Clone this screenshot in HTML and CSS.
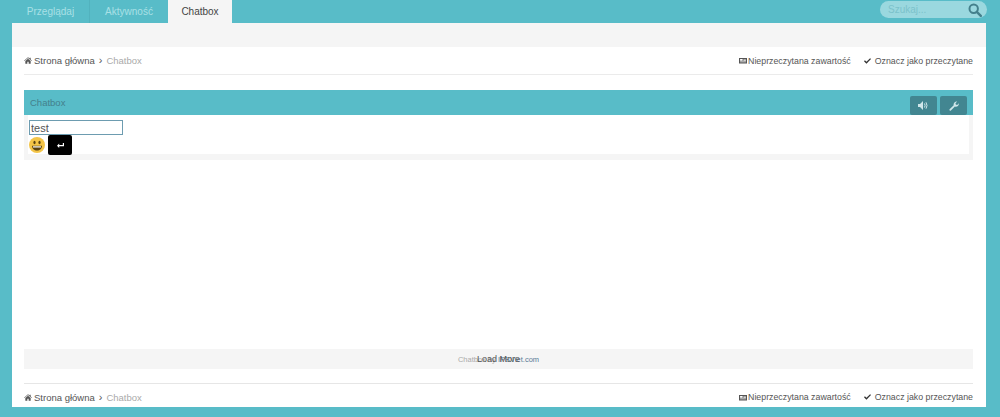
FILE: index.html
```html
<!DOCTYPE html>
<html lang="pl">
<head>
  <meta charset="UTF-8">
  <title>Chatbox</title>
  <link rel="stylesheet" href="styles.css">
</head>
<body>
  <svg class="defs" width="0" height="0">
    <symbol id="i-home" viewBox="0 0 12 10"><path d="M6 0 0 5.2l.6.7L6 1.3l5.4 4.6.6-.7-2-1.7V1H8.600v1L6 0ZM6 2.300 2 5.700V10h3V7h2v3h3V5.700L6 2.300Z"/></symbol>
    <symbol id="i-news" viewBox="0 0 11 9"><path d="M0 1h11v7.500H0V1Zm1.500 1.300v2.500h3.500V2.300H1.500Zm4.500 0v.8h3.500v-.8H6Zm0 1.600v.9h3.500v-.9H6ZM1.500 6v.8h8V6h-8Z"/></symbol>
    <symbol id="i-check" viewBox="0 0 10 8"><path d="M0 4.300 1.300 3l2.200 2.200L8.700 0 10 1.300 3.500 7.800 0 4.300Z"/></symbol>
  </svg>

  <nav class="topbar">
    <ul class="tabs">
      <li class="tab">Przeglądaj</li>
      <li class="tab">Aktywność</li>
      <li class="tab tab-active">Chatbox</li>
    </ul>
    <div class="search">
      <span class="search-text">Szukaj...</span>
      <svg class="search-icon" viewBox="0 0 14 14" width="14" height="14"><circle cx="5.700" cy="5.700" r="4.200" fill="none" stroke="#44808c" stroke-width="2"/><path d="m8.800 8.800 4 4" stroke="#44808c" stroke-width="2.400" stroke-linecap="round"/></svg>
    </div>
  </nav>

  <main class="page">
    <div class="page-strip"></div>
    <div class="content">
      <div class="crumbs crumbs-top">
        <div class="crumb-path">
          <svg class="ico ico-home"><use href="#i-home"/></svg>
          <span>Strona główna</span>
          <span class="sep">›</span>
          <span class="crumb-current">Chatbox</span>
        </div>
        <div class="crumb-links">
          <span class="crumb-link"><svg class="ico ico-news"><use href="#i-news"/></svg>Nieprzeczytana zawartość</span>
          <span class="crumb-link link-read"><svg class="ico ico-check"><use href="#i-check"/></svg>Oznacz jako przeczytane</span>
        </div>
      </div>

      <section class="chatbox">
        <header class="chatbox-head">
          <h2>Chatbox</h2>
          <div class="head-btns">
            <button class="head-btn" type="button">
              <svg viewBox="0 0 11 9" width="11" height="9"><path d="M0 3h2l3-3v9L2 6H0V3Z" fill="#cfe6ea"/><path d="M6.500 2.500q1.200 2 0 4M8 1.300q2 3.200 0 6.400" fill="none" stroke="#cfe6ea"/></svg>
            </button>
            <button class="head-btn" type="button">
              <svg viewBox="0 0 10 10" width="10" height="10"><path d="M.6 8.200 4.700 4.300C4.200 2.400 5.600.3 8.200.5L6.500 2.200l.3 1.400 1.400.3L9.800 2.300c.3 2.500-1.900 4-3.900 3.300L1.900 9.500c-.8.700-2 -.6-1.300-1.300Z" fill="#cfe6ea"/></svg>
            </button>
          </div>
        </header>
        <div class="chatbox-body">
          <div class="chatbox-form">
            <input class="chat-input" type="text" value="test">
            <div class="chat-actions">
              <svg class="smiley" viewBox="0 0 16 16" width="16" height="16">
                <circle cx="8" cy="8" r="8" fill="#f4c548"/>
                <ellipse cx="5.500" cy="5.500" rx="1.100" ry="1.700" fill="#5a4310"/>
                <ellipse cx="10.500" cy="5.500" rx="1.100" ry="1.700" fill="#5a4310"/>
                <path d="M3 8.700h10c0 3-2.200 4.800-5 4.800s-5-1.800-5-4.800Z" fill="#5a4310"/>
                <path d="M4 9.300h8v1.200H4z" fill="#fff"/>
              </svg>
              <button class="send-btn" type="button">
                <svg viewBox="0 0 7 5" width="7" height="5"><path d="M5.800 0H7v3.200H2.200V5L0 2.700 2.200.6v1.500h3.600V0Z" fill="#fff"/></svg>
              </button>
            </div>
          </div>
        </div>
      </section>

      <div class="load-more">
        <span class="credit">Chatbox by <span class="credit-link">IPBViet.com</span></span>
        <span class="load-label">Load More</span>
      </div>

      <div class="crumbs crumbs-bottom">
        <div class="crumb-path">
          <svg class="ico ico-home"><use href="#i-home"/></svg>
          <span>Strona główna</span>
          <span class="sep">›</span>
          <span class="crumb-current">Chatbox</span>
        </div>
        <div class="crumb-links">
          <span class="crumb-link"><svg class="ico ico-news"><use href="#i-news"/></svg>Nieprzeczytana zawartość</span>
          <span class="crumb-link link-read"><svg class="ico ico-check"><use href="#i-check"/></svg>Oznacz jako przeczytane</span>
        </div>
      </div>
    </div>
  </main>
</body>
</html>
```

FILE: styles.css
```css
html, body {
  height: 417px;
  overflow: hidden;
}

body {
  margin: 0;
  background-color: #58bcc8;
  font-family: "Liberation Sans", Arial, sans-serif;
  font-size: 9px;
  color: #555;
}

.defs {
  position: absolute;
}

.topbar {
  height: 23px;
  display: flex;
  justify-content: space-between;
  padding: 0 13px 0 12px;
}

.tabs {
  display: flex;
  list-style: none;
  margin: 0;
  padding: 0;
}

.tab {
  width: 77px;
  line-height: 23px;
  text-align: center;
  font-size: 10px;
  color: #a9e0e6;
  border-right: 1px solid #52b2be;
}

.tab:nth-child(2) {
  width: 78px;
  border-right: 0;
}

.tab-active {
  width: 64px;
  background-color: #f5f5f5;
  color: #444;
  border-right: 0;
}

.search {
  width: 107px;
  height: 17px;
  margin-top: 1px;
  padding: 0 5px 0 8px;
  box-sizing: border-box;
  display: flex;
  align-items: center;
  justify-content: space-between;
  background-color: #9ad8df;
  border-radius: 9px;
}

.search-text {
  font-size: 10px;
  color: #7cc2cb;
}

.page {
  width: 974px;
  height: 384px;
  margin-left: 12px;
  background-color: #fff;
}

.page-strip {
  height: 24px;
  background-color: #f5f5f5;
}

.content {
  padding: 0 13px 0 12px;
}

.crumbs {
  display: flex;
  justify-content: space-between;
  align-items: center;
}

.crumbs-top {
  height: 27px;
  border-bottom: 1px solid #ebebeb;
}

.crumbs-bottom {
  height: 26px;
  margin-top: 14px;
  border-top: 1px solid #e6e6e6;
}

.crumb-path {
  display: flex;
  align-items: center;
  font-size: 9.500px;
  color: #555;
}

.sep {
  margin: 0 4px;
  font-size: 11px;
  line-height: 9px;
}

.crumb-current {
  color: #aaa;
}

.crumb-links {
  display: flex;
  font-size: 8.800px;
}

.crumb-link {
  display: flex;
  align-items: center;
}

.link-read {
  margin-left: 13px;
}

.ico {
  fill: #555;
}

.ico-home {
  width: 8px;
  height: 7px;
  margin-right: 2px;
}

.ico-news {
  width: 8px;
  height: 7px;
  margin-right: 1px;
}

.ico-check {
  width: 7px;
  height: 6px;
  margin-right: 4px;
  fill: #333;
}

.chatbox {
  margin-top: 15px;
}

.chatbox-head {
  height: 25px;
  display: flex;
  justify-content: space-between;
  align-items: flex-start;
  background-color: #58bcc8;
  padding: 0 6px;
}

.chatbox-head h2 {
  margin: 7px 0 0;
  font-size: 9.500px;
  font-weight: normal;
  color: #44808c;
}

.head-btns {
  display: flex;
  gap: 3px;
  margin-top: 6px;
}

.head-btn {
  width: 27px;
  height: 19px;
  padding: 0;
  border: 0;
  border-radius: 2px;
  background-color: #428691;
  display: flex;
  align-items: center;
  justify-content: center;
}

.chatbox-body {
  height: 42px;
  background-color: #f5f5f5;
  padding: 0 4px 3px 0;
}

.chatbox-form {
  height: 39px;
  margin-left: 4px;
  padding-left: 1px;
  background-color: #fff;
  margin-right: 0;
}

.chat-input {
  display: block;
  box-sizing: border-box;
  width: 94px;
  height: 15px;
  padding: 0 1px;
  position: relative;
  top: 5px;
  border: 1px solid #6d9cb0;
  font-family: inherit;
  font-size: 11px;
  color: #555;
  outline: 0;
}

.chat-actions {
  display: flex;
  align-items: center;
  gap: 3px;
  margin-top: 5px;
}

.send-btn {
  width: 24px;
  height: 20px;
  padding: 0;
  border: 0;
  border-radius: 2px;
  background-color: #000;
  display: flex;
  align-items: center;
  justify-content: center;
}

.load-more {
  height: 20px;
  margin-top: 189px;
  display: grid;
  place-items: center;
  background-color: #f5f5f5;
}

.credit, .load-label {
  grid-area: 1 / 1;
}

.credit {
  font-size: 7.500px;
  color: #aaa;
}

.credit-link {
  color: #5a7a96;
}

.load-label {
  font-size: 9px;
  color: #555;
}
```
